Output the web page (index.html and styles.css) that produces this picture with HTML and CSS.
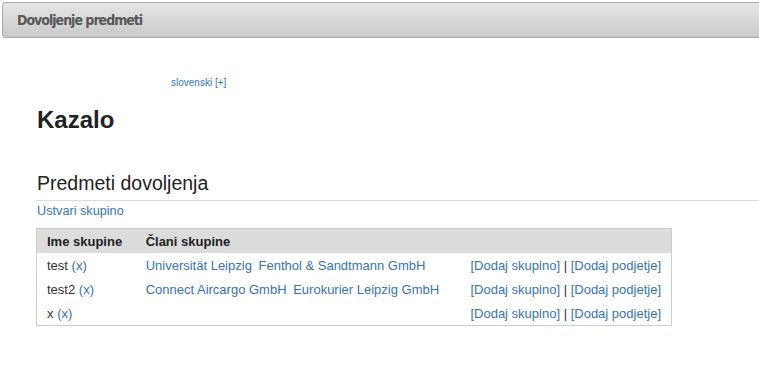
FILE: index.html
```html
<!DOCTYPE html>
<html lang="sl">
<head>
	<meta charset="UTF-8">
	<title>Dovoljenje predmeti</title>
	<link rel="stylesheet" href="styles.css">
</head>
<body>
	<div id="header">
		<h1>Dovoljenje predmeti</h1>
	</div>

	<div id="content">
		<div id="lang">
			<a href="javascript:;">slovenski [+]</a>
		</div>

		<h2 class="title">Kazalo</h2>

		<h3 class="section">Predmeti dovoljenja</h3>
		<div class="actions">
			<a href="javascript:;">Ustvari skupino</a>
		</div>

		<table id="groups">
			<tr>
				<th class="col-name">Ime skupine</th>
				<th class="col-members">Člani skupine</th>
				<th></th>
			</tr>
			<tr>
				<td>test <a href="javascript:;">(x)</a></td>
				<td class="members">
					<a href="javascript:;">Universität Leipzig</a>
					<a href="javascript:;">Fenthol &amp; Sandtmann GmbH</a>
				</td>
				<td class="ops"><a href="javascript:;">[Dodaj skupino]</a> | <a href="javascript:;">[Dodaj podjetje]</a></td>
			</tr>
			<tr>
				<td>test2 <a href="javascript:;">(x)</a></td>
				<td class="members">
					<a href="javascript:;">Connect Aircargo GmbH</a>
					<a href="javascript:;">Eurokurier Leipzig GmbH</a>
				</td>
				<td class="ops"><a href="javascript:;">[Dodaj skupino]</a> | <a href="javascript:;">[Dodaj podjetje]</a></td>
			</tr>
			<tr>
				<td>x <a href="javascript:;">(x)</a></td>
				<td class="members"></td>
				<td class="ops"><a href="javascript:;">[Dodaj skupino]</a> | <a href="javascript:;">[Dodaj podjetje]</a></td>
			</tr>
		</table>
	</div>
</body>
</html>
```

FILE: styles.css
```css
* {
    margin: 0;
    padding: 0;
}

body {
    font-family: "Liberation Sans", Arial, sans-serif;
    color: #333;
    background: #fff;
}

a {
    color: #3574b6;
    text-decoration: none;
}

#header {
    height: 34px;
    margin: 2px 0 0 2px;
    border: 1px solid #a9a9a9;
    border-right: none;
    border-radius: 4px 0 0 4px;
    background: linear-gradient(#e6e6e6, #c9c9c9);
}

#header h1 {
    padding-left: 14px;
    font-family: "DejaVu Sans Condensed", "DejaVu Sans", sans-serif;
    font-size: 14px;
    font-weight: bold;
    line-height: 34px;
    letter-spacing: -1px;
    color: #575757;
}

#content {
    padding-left: 37px;
}

#lang {
    margin-top: 38px;
    padding-left: 134px;
    font-size: 10px;
    line-height: 14px;
}

.title {
    margin-top: 16px;
    font-size: 24px;
    font-weight: bold;
    line-height: 28px;
    color: #222;
}

.section {
    margin-top: 37px;
    font-size: 19.5px;
    font-weight: normal;
    line-height: 24px;
    color: #222;
}

.actions {
    margin-top: 5px;
    margin-left: -1px;
    padding: 3px 0 0 1px;
    border-top: 1px solid #dcdcdc;
    font-size: 12.7px;
    line-height: 14px;
}

#groups {
    width: 636px;
    margin: 10px 0 0 -1px;
    border: 1px solid #cdcdcd;
    border-collapse: collapse;
    font-size: 13px;
}

#groups th {
    height: 24px;
    padding: 0 10px;
    text-align: left;
    color: #222;
    background: #dcdcdc;
}

#groups td {
    height: 24px;
    padding: 0 10px;
    white-space: nowrap;
}

#groups .col-name {
    width: 83px;
}

#groups .col-members {
    width: 306px;
}

#groups .members a {
    margin-right: 3px;
}

#groups .ops {
    text-align: right;
}
```
